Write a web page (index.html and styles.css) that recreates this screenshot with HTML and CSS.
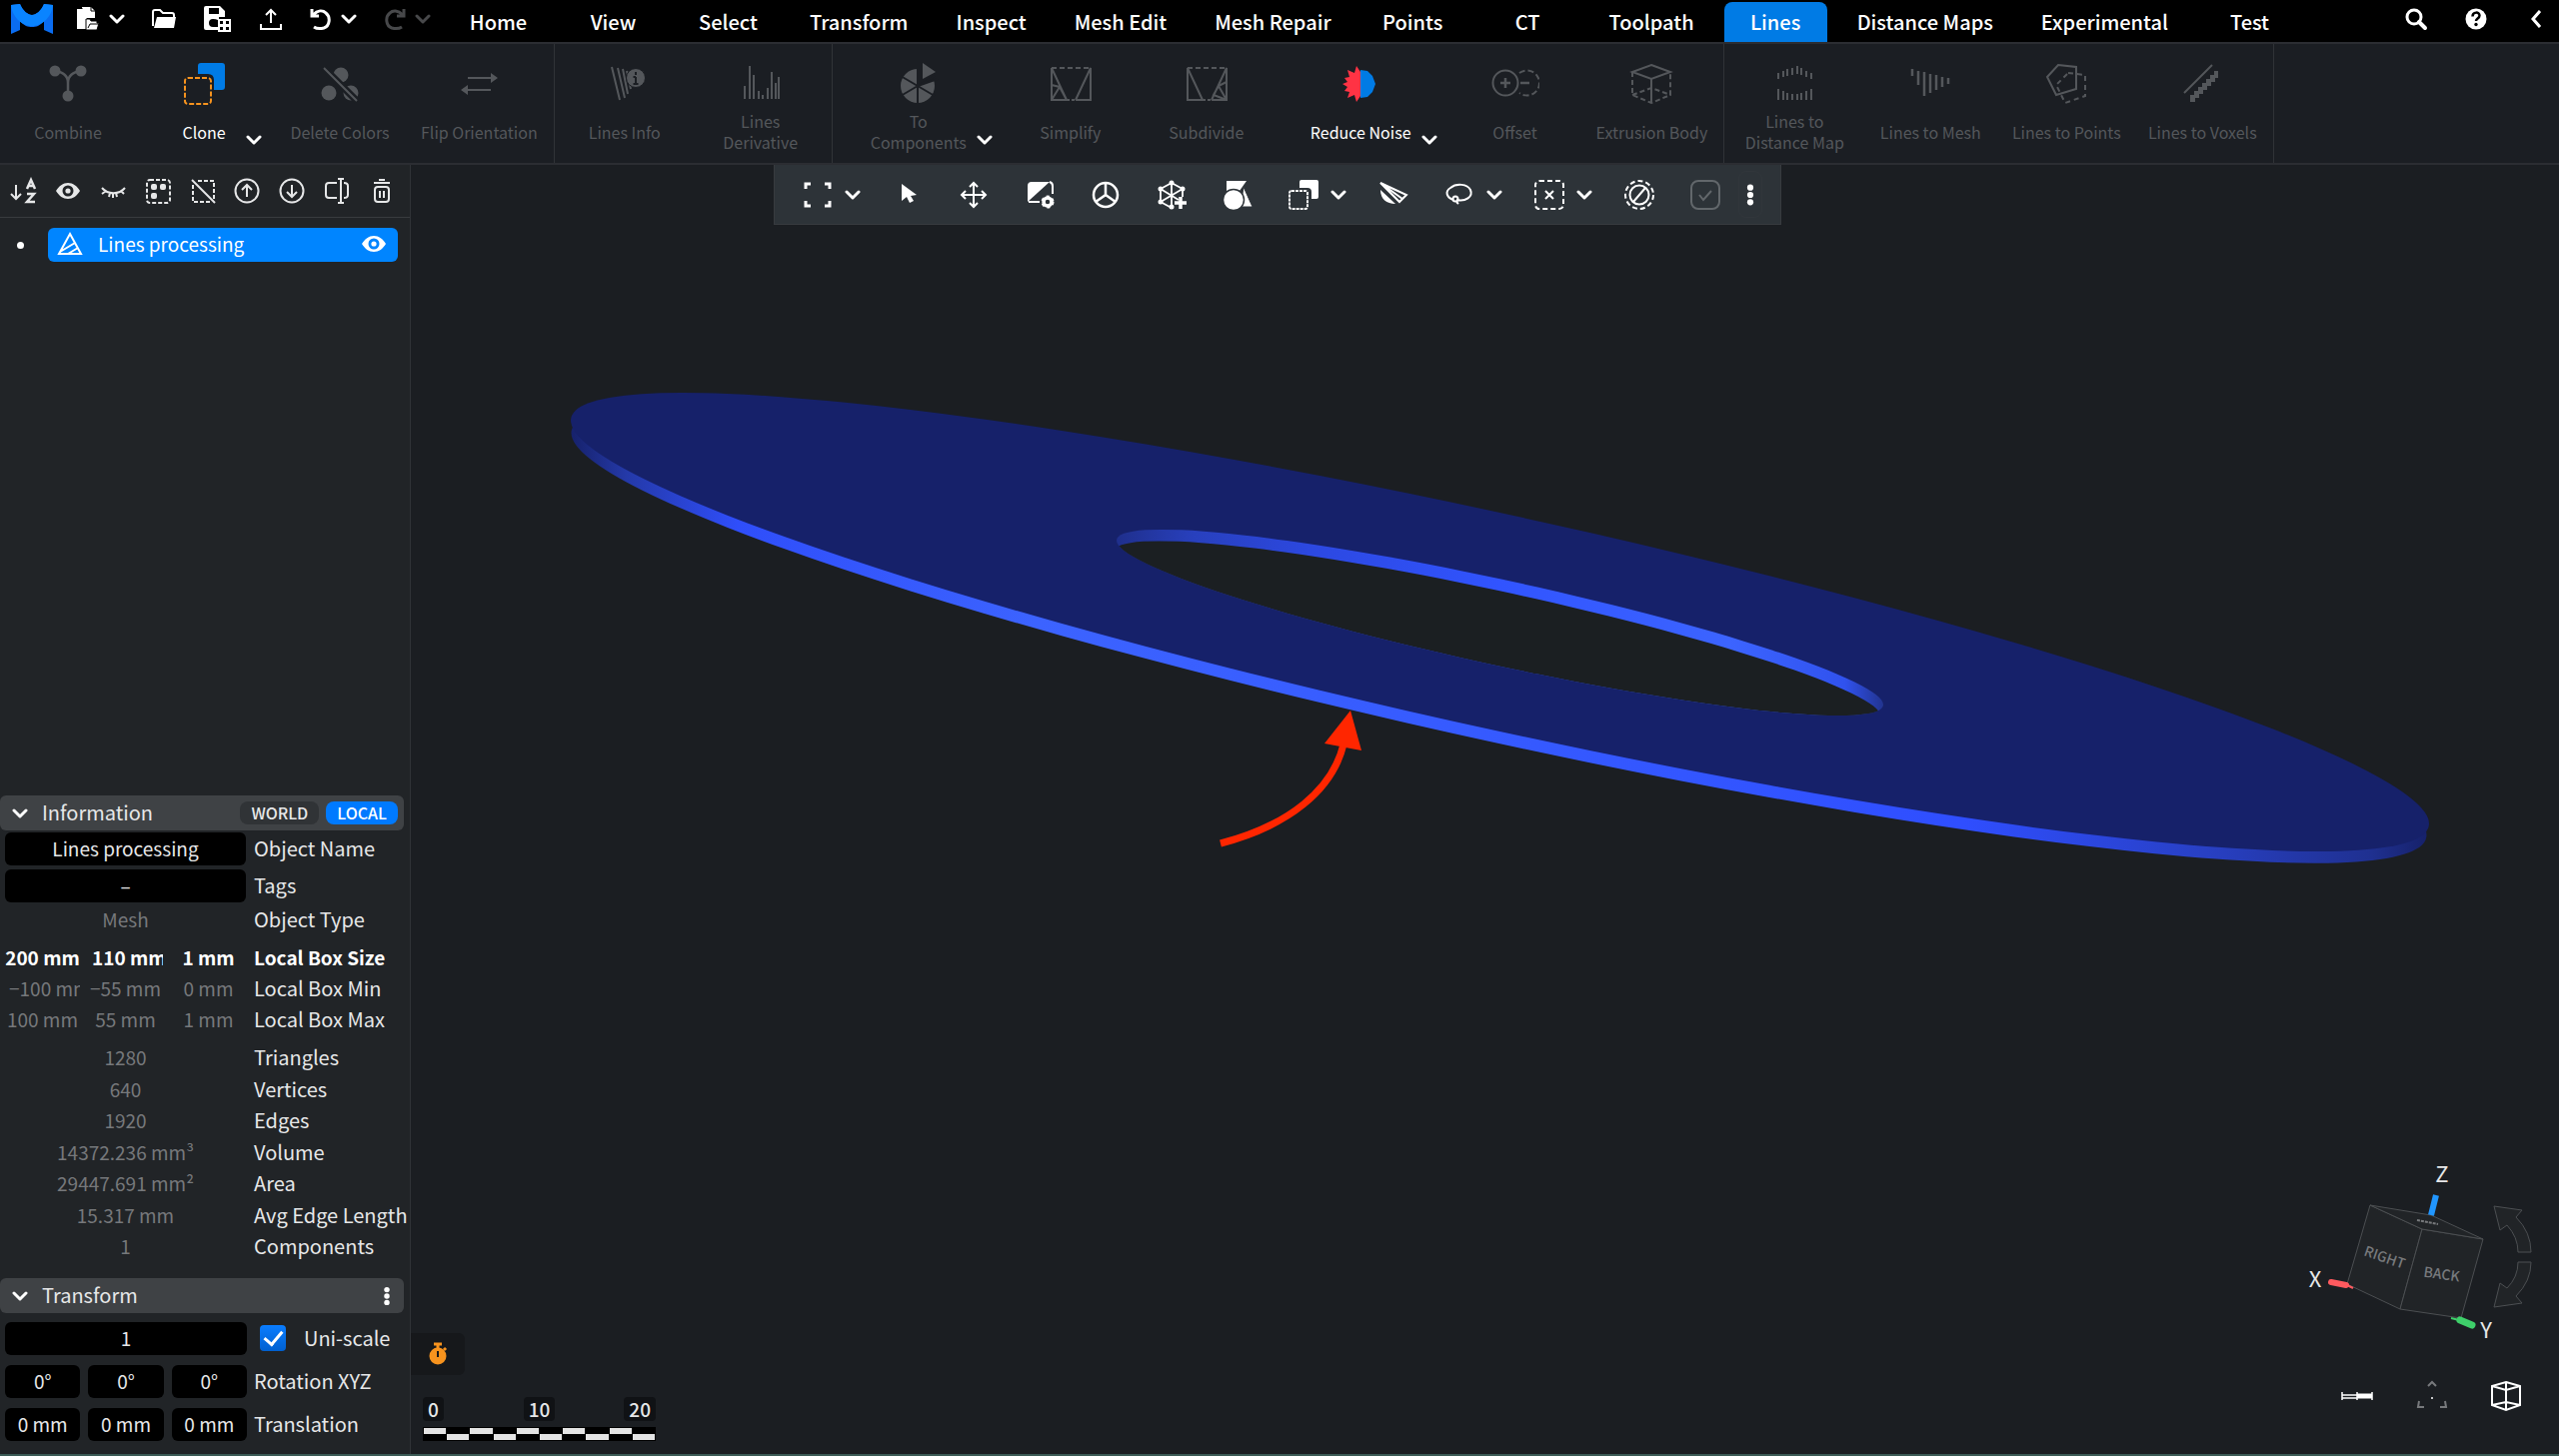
FILE: index.html
```html
<!DOCTYPE html>
<html lang="en">
<head>
  <meta charset="UTF-8">
  <meta name="viewport" content="width=device-width, initial-scale=1">
  <title>Lines processing</title>
  <link rel="stylesheet" href="styles.css">
</head>
<body>

<!-- shared icons -->
<svg class="defs" aria-hidden="true">
  <symbol id="chevron" viewBox="0 0 16 16"><path d="M2 5l6 6 6-6" fill="none" stroke="currentColor" stroke-width="3" stroke-linecap="round" stroke-linejoin="round"/></symbol>
  <symbol id="dots" viewBox="0 0 24 30"><circle cx="12" cy="7" r="3.4"/><circle cx="12" cy="15" r="3.4"/><circle cx="12" cy="23" r="3.4"/></symbol>
  <symbol id="eye" viewBox="0 0 28 28"><path fill-rule="evenodd" d="M2 14C5 9 9 6 14 6s9 3 12 8c-3 5-7 8-12 8s-9-3-12-8zm12-5.500a5.500 5.500 0 1 0 0 11 5.500 5.500 0 0 0 0-11z"/><circle cx="14" cy="14" r="2.600"/></symbol>
</svg>

<header class="topbar">
  <div class="quick">
    <svg class="logo" viewBox="0 0 42 30"><path fill="#0a6cf0" d="M0 1l9-1c3 7 8 11 12 11s9-4 12-11l9 1v29l-9-4v-9c-4 5-8 6-12 6s-8-1-12-6v9l-9 4z"/><path fill="#0a84ff" d="M0 1l9-1c3 7 8 11 12 11s9-4 12-11l9 1c-1 11-10 21-21 21S1 12 0 1z"/></svg>
    <button class="qbtn" aria-label="New"><svg viewBox="0 0 26 26" width="26" height="26" fill="#fff"><path d="M2 3h5V1h9l4 4v7h-8v11H2z"/><path d="M7 3v-1M16 1v4h4" stroke="#000" fill="none"/><path d="M11 13h4l1 2h6v2h2l-2 7H11z" stroke="#000"/><path d="M13 22l2-4h8" stroke="#000" fill="none"/></svg><svg class="chev"><use href="#chevron"/></svg></button>
    <button class="qbtn" aria-label="Open"><svg viewBox="0 0 26 26" width="26" height="26"><path d="M2 20V6q0-2 2-2h5l3 3h9q2 0 2 2v2" fill="none" stroke="#fff" stroke-width="2"/><path d="M6 11h19l-2 11H3z" fill="#fff"/></svg></button>
    <button class="qbtn" aria-label="Save as"><svg viewBox="0 0 30 28" width="30" height="28" fill="#fff"><path fill-rule="evenodd" d="M3 1h14l5 5v6h-6v13H3q-2 0-2-2V3q0-2 2-2zM6 3v6h10V3zm4 11a4 4 0 0 0 0 8h5v-7q-2-1-5-1z"/><path fill-rule="evenodd" d="M15 14h13v13H15zm2 2v3h3v-3zm6 0v3h3v-3zm-6 6v3h3v-3zm6 0v3h3v-3z"/></svg></button>
    <button class="qbtn" aria-label="Export"><svg viewBox="0 0 24 24" width="24" height="24" fill="none" stroke="#fff" stroke-width="2"><path d="M12 16V4M7 8l5-5 5 5M2 17v5h20v-5"/></svg></button>
    <button class="qbtn" aria-label="Undo"><svg viewBox="0 0 24 24" width="24" height="24" fill="none" stroke="#fff" stroke-width="3"><path d="M3 2v7h7M4 8c5-5 10-5 13-2 5 4 4 13-2 15-4 1-7 1-10-1"/></svg><svg class="chev"><use href="#chevron"/></svg></button>
    <button class="qbtn qbtn-off" aria-label="Redo"><svg viewBox="0 0 24 24" width="24" height="24" fill="none" stroke="currentColor" stroke-width="3"><path d="M21 2v7h-7M20 8C15 3 10 3 7 6c-5 4-4 13 2 15 4 1 7 1 10-1"/></svg><svg class="chev"><use href="#chevron"/></svg></button>
  </div>

  <nav class="tabs">
    <a href="#">Home</a>
    <a href="#">View</a>
    <a href="#">Select</a>
    <a href="#">Transform</a>
    <a href="#">Inspect</a>
    <a href="#">Mesh Edit</a>
    <a href="#">Mesh Repair</a>
    <a href="#">Points</a>
    <a href="#">CT</a>
    <a href="#">Toolpath</a>
    <a href="#" class="active" aria-current="page">Lines</a>
    <a href="#">Distance Maps</a>
    <a href="#">Experimental</a>
    <a href="#">Test</a>
  </nav>

  <div class="top-right">
    <button aria-label="Search"><svg viewBox="0 0 24 24" width="24" height="24" fill="none" stroke="#fff"><circle cx="10" cy="10" r="7" stroke-width="3"/><path d="M15 15l6 6" stroke-width="4" stroke-linecap="round"/></svg></button>
    <button aria-label="Help"><svg viewBox="0 0 24 24" width="24" height="24"><circle cx="12" cy="12" r="10.500" fill="#fff"/><path d="M8.500 9.500c0-5 7-5 7-1 0 3-3.500 3-3.500 5.500" fill="none" stroke="#000" stroke-width="2.500"/><circle cx="12" cy="17.500" r="1.700"/></svg></button>
    <button aria-label="Collapse"><svg viewBox="0 0 24 24" width="24" height="24" fill="none" stroke="#fff" stroke-width="3"><path d="M16 4l-7 8 7 8"/></svg></button>
  </div>
</header>

<div class="ribbon">
  <section class="group">
    <button class="tool" disabled><svg viewBox="0 0 48 48" fill="currentColor"><circle cx="11" cy="11" r="5.500"/><circle cx="37" cy="11" r="5.500"/><circle cx="24" cy="36" r="5.500"/><path d="M11 11c8 1 13 5 13 12v12M37 11c-8 1-13 5-13 12" fill="none" stroke="currentColor" stroke-width="2.500"/></svg><span>Combine</span></button>
    <button class="tool"><svg viewBox="0 0 48 48"><path fill="#007be5" d="M18 14V6q0-3 3-3h21q3 0 3 3v21q0 3-3 3h-8V20q0-6-6-6z"/><rect x="5" y="18" width="26" height="26" rx="3" fill="none" stroke="#f7931e" stroke-width="2" stroke-dasharray="5 2"/></svg><span>Clone</span><svg class="chev"><use href="#chevron"/></svg></button>
    <button class="tool" disabled><svg viewBox="0 0 48 48" fill="currentColor"><circle cx="25" cy="15" r="7.500"/><circle cx="13" cy="33" r="7.500"/><circle cx="35" cy="33" r="7.500"/><path d="M8 8l33 33" stroke="#1b1e23" stroke-width="7"/><path d="M8 8l33 33" stroke="currentColor" stroke-width="2"/></svg><span>Delete Colors</span></button>
    <button class="tool" disabled><svg viewBox="0 0 48 48" fill="currentColor"><path d="M13 18h25M36 30H11" stroke="currentColor" stroke-width="2"/><path d="M36 13l7 5-7 5zM13 25l-7 5 7 5z"/></svg><span>Flip Orientation</span></button>
  </section>
  <section class="group">
    <button class="tool" disabled><svg viewBox="0 0 48 48"><path d="M11 7l8 33M17 8l7 30M22 9l5 25M26 11l4 18" fill="none" stroke="currentColor" stroke-width="2"/><circle cx="35" cy="18" r="9.500" fill="currentColor" stroke="#1b1e23"/><path d="M35 17v7M32.500 24h5M32.500 17H35M35 12v3" stroke="#1b1e23" stroke-width="2"/></svg><span>Lines Info</span></button>
    <button class="tool" disabled><svg viewBox="0 0 48 48"><path d="M8 26v13M13 6v33M17 15v24M22 31v8M26 35v4M31 28v11M35 12v27M39 23v16M42 17v22" stroke="currentColor" stroke-width="2"/></svg><span>Lines<br>Derivative</span></button>
  </section>
  <section class="group">
    <button class="tool" disabled><svg viewBox="0 0 48 48"><circle cx="23" cy="26" r="17" fill="currentColor"/><path d="M23 26V7h20v12zM23 7v38M6 16l34 20M6 36l34-20" fill="#1b1e23" stroke="#1b1e23" stroke-width="2"/><path d="M28 19V3l13 9z" fill="currentColor"/></svg><span>To<br>Components</span><svg class="chev"><use href="#chevron"/></svg></button>
    <button class="tool" disabled><svg viewBox="0 0 48 48" fill="none" stroke="currentColor" stroke-width="2"><path d="M5 8v32h15M29 40h15V8L29 40M5 8l15 32M5 25l8 2-8 13M13 27l7 13"/><path d="M5 8h39" stroke-dasharray="5 3"/><path d="M20 40h9" stroke-dasharray="3 2"/></svg><span>Simplify</span></button>
    <button class="tool" disabled><svg viewBox="0 0 48 48" fill="none" stroke="currentColor" stroke-width="2"><path d="M20 40H5V8l15 32M29 40h15V8L29 40M44 22l-8 4 8 14M36 26l-5 9 13 5"/><path d="M5 8h39" stroke-dasharray="5 3"/><path d="M20 40h9" stroke-dasharray="3 2"/></svg><span>Subdivide</span></button>
    <button class="tool"><svg viewBox="0 0 48 48"><path fill="#ff3344" d="M24 12l-4-6-2 7-7-3 2 7-5 1 3 4-5 2 5 3-3 4 5 1-2 6 7-3 2 7 4-6z"/><path fill="#007be5" d="M24 10l7 1 5 5 3 8-3 8-5 5-7 1z"/></svg><span>Reduce Noise</span><svg class="chev"><use href="#chevron"/></svg></button>
    <button class="tool" disabled><svg viewBox="0 0 48 48" fill="none" stroke="currentColor" stroke-width="2"><circle cx="14" cy="23" r="12.500"/><path d="M14 18v10M9 23h10M29 23h9" stroke-width="2.500"/><path d="M28 13a12.500 12.500 0 1 1 0 20" stroke-dasharray="6 3"/></svg><span>Offset</span></button>
    <button class="tool" disabled><svg viewBox="0 0 48 48" fill="none" stroke="currentColor" stroke-width="2"><path d="M24 5l19 7-19 7-19-7zM24 19v24"/><path d="M5 12v23l19 8 19-8V12M5 35l19-7 19 7" stroke-dasharray="5 3"/></svg><span>Extrusion Body</span></button>
  </section>
  <section class="group">
    <button class="tool" disabled><svg viewBox="0 0 48 48"><path d="M8 13v6M13 11v6M17 9v7M22 8v7M27 6v8M31 8v7M36 11v6M41 13v6M8 29v11M13 31v9M17 33v7M22 34v6M27 34v6M31 33v7M36 31v9M41 29v11" stroke="currentColor" stroke-width="2"/></svg><span>Lines to<br>Distance Map</span></button>
    <button class="tool" disabled><svg viewBox="0 0 48 48"><path d="M6 9v7M12 11v14M18 12v24M24 14v19M30 15v15M36 17v10M42 18v6" stroke="currentColor" stroke-width="2.500"/></svg><span>Lines to Mesh</span></button>
    <button class="tool" disabled><svg viewBox="0 0 48 48" fill="none" stroke="currentColor" stroke-width="2"><path d="M16 5l18 2v22l-20 6L5 17z"/><path d="M26 13l17 2v21l-20 7-9-18z" stroke-dasharray="5 4"/></svg><span>Lines to Points</span></button>
    <button class="tool" disabled><svg viewBox="0 0 48 48"><path d="M6 33L34 5" stroke="currentColor" stroke-width="2"/><path fill="currentColor" d="M12 35h4v-4h4v-4h4v-4h4v-4h4v-4h4v-4h4v7h-3v4h-4v4h-4v4h-4v4h-4v4h-4v4h-5z"/></svg><span>Lines to Voxels</span></button>
  </section>
</div>

<main class="workspace">
  <aside class="sidebar">
    <div class="tree-tools">
      <button aria-label="Sort"><svg viewBox="0 0 28 28"><path d="M7 8v14M2 17l5 5 5-5" fill="none" stroke="currentColor" stroke-width="2"/><path d="M18 12l4-9 4 9M19 9h6M18 17h7l-7 8h8" fill="none" stroke="currentColor" stroke-width="2.500"/></svg></button>
      <button aria-label="Show all"><svg><use href="#eye"/></svg></button>
      <button aria-label="Hide all"><svg viewBox="0 0 28 28" fill="none" stroke="currentColor" stroke-width="2"><path d="M3 11c6 7 17 7 23 0M7 14l-4 3M11 16l-1 4M17 16l1 4M22 14l3 3M14 16v5"/></svg></button>
      <button aria-label="Select all"><svg viewBox="0 0 28 28"><rect x="3" y="3" width="23" height="23" rx="3" fill="none" stroke="currentColor" stroke-width="2" stroke-dasharray="4 2"/><rect x="7" y="7" width="6" height="6" rx="2"/><rect x="16" y="7" width="6" height="6" rx="2"/><rect x="7" y="16" width="6" height="6" rx="2"/></svg></button>
      <button aria-label="Unselect all"><svg viewBox="0 0 28 28" fill="none" stroke="currentColor" stroke-width="2"><path d="M9 4h16v18M21 25H4V8" stroke-dasharray="4 2"/><path d="M3 3l23 23"/></svg></button>
      <button aria-label="Move up"><svg viewBox="0 0 28 28" fill="none" stroke="currentColor" stroke-width="2"><circle cx="14" cy="14" r="11.500"/><path d="M14 20V8M9 13l5-5 5 5"/></svg></button>
      <button aria-label="Move down"><svg viewBox="0 0 28 28" fill="none" stroke="currentColor" stroke-width="2"><circle cx="14" cy="14" r="11.500"/><path d="M14 8v12M9 15l5 5 5-5"/></svg></button>
      <button aria-label="Rename"><svg viewBox="0 0 28 28" fill="none" stroke="currentColor" stroke-width="2"><path d="M14 6H6q-3 0-3 3v9q0 3 3 3h8M21 6q4 0 4 3v9q0 3-4 3M18 3v23M15 2h6M15 26h6"/></svg></button>
      <button aria-label="Delete"><svg viewBox="0 0 28 28" fill="none" stroke="currentColor" stroke-width="2"><rect x="7" y="10" width="14" height="15" rx="3"/><path d="M6 6h16M11 3h6M12 14v7M16 14v7"/></svg></button>
    </div>

    <div class="tree">
      <span class="bullet"></span>
      <button class="tree-item">
        <svg viewBox="0 0 28 28" fill="none" stroke="currentColor" stroke-width="2"><path d="M14 4l11 20H3zM4 22l15-9M12 24l10-6"/></svg>
        <span>Lines processing</span>
        <svg fill="#fff"><use href="#eye"/></svg>
      </button>
    </div>

    <section class="panel">
      <header class="panel-head">
        <svg class="chev"><use href="#chevron"/></svg>
        <h2>Information</h2>
        <button class="pill">WORLD</button>
        <button class="pill on">LOCAL</button>
      </header>
      <table class="info">
        <colgroup><col class="v"><col class="v"><col class="v"><col></colgroup>
        <tbody>
          <tr class="field"><td colspan="3"><input type="text" id="objName" value="Lines processing"></td><th><label for="objName">Object Name</label></th></tr>
          <tr class="field"><td colspan="3"><input type="text" id="tags" value="–"></td><th><label for="tags">Tags</label></th></tr>
          <tr><td colspan="3">Mesh</td><th>Object Type</th></tr>
        </tbody>
        <tbody>
          <tr class="strong"><td>200 mm</td><td class="clip">110 mm</td><td>1 mm</td><th>Local Box Size</th></tr>
          <tr><td class="clip">−100 mm</td><td>−55 mm</td><td>0 mm</td><th>Local Box Min</th></tr>
          <tr><td>100 mm</td><td>55 mm</td><td>1 mm</td><th>Local Box Max</th></tr>
        </tbody>
        <tbody class="stats">
          <tr><td colspan="3">1280</td><th>Triangles</th></tr>
          <tr><td colspan="3">640</td><th>Vertices</th></tr>
          <tr><td colspan="3">1920</td><th>Edges</th></tr>
          <tr><td colspan="3">14372.236 mm³</td><th>Volume</th></tr>
          <tr><td colspan="3">29447.691 mm²</td><th>Area</th></tr>
          <tr><td colspan="3">15.317 mm</td><th>Avg Edge Length</th></tr>
          <tr><td colspan="3">1</td><th>Components</th></tr>
        </tbody>
      </table>
    </section>

    <section class="panel">
      <header class="panel-head">
        <svg class="chev"><use href="#chevron"/></svg>
        <h2>Transform</h2>
        <button class="more" aria-label="Transform options"><svg width="22" height="24" fill="#fff"><use href="#dots"/></svg></button>
      </header>
      <div class="transform">
        <div class="trow"><input type="text" value="1" aria-label="Scale"><label class="uni"><input type="checkbox" checked>Uni-scale</label></div>
        <div class="trow"><div class="xyz"><input type="text" value="0°" aria-label="Rotation X"><input type="text" value="0°" aria-label="Rotation Y"><input type="text" value="0°" aria-label="Rotation Z"></div><span>Rotation XYZ</span></div>
        <div class="trow"><div class="xyz"><input type="text" value="0 mm" aria-label="Translation X"><input type="text" value="0 mm" aria-label="Translation Y"><input type="text" value="0 mm" aria-label="Translation Z"></div><span>Translation</span></div>
      </div>
    </section>
  </aside>

  <div class="viewport">
    <!-- flat ring with a hole, seen at an angle -->
    <svg class="scene" viewBox="411 165 2149 1290" preserveAspectRatio="xMidYMid slice">
      <defs>
        <linearGradient id="rim" gradientUnits="userSpaceOnUse" x1="-929" y1="0" x2="929" y2="0">
          <stop offset="0" stop-color="#16216a"/><stop offset=".03" stop-color="#2439a8"/><stop offset=".09" stop-color="#2f4efa"/><stop offset=".25" stop-color="#3c63ff"/><stop offset=".6" stop-color="#3356ff"/><stop offset=".75" stop-color="#2f4eff"/><stop offset=".88" stop-color="#2840c4"/><stop offset=".97" stop-color="#1f3090"/><stop offset="1" stop-color="#16216a"/>
        </linearGradient>
        <linearGradient id="hole-rim" gradientUnits="userSpaceOnUse" x1="1117" y1="0" x2="1884" y2="0">
          <stop offset="0" stop-color="#1f2f8c"/><stop offset=".1" stop-color="#2840bd"/><stop offset=".25" stop-color="#2c48e0"/><stop offset=".5" stop-color="#3154ff"/><stop offset=".8" stop-color="#3c64ff"/><stop offset=".95" stop-color="#3052ee"/><stop offset="1" stop-color="#22348f"/>
        </linearGradient>
        <clipPath id="hole"><ellipse rx="383.500" ry="43.700" transform="translate(1500.500 623) skewY(12.100)"/></clipPath>
      </defs>
      <ellipse rx="928" ry="109.500" fill="url(#rim)" transform="translate(1499.500 634.500) skewY(12.240)"/>
      <ellipse rx="929.500" ry="109.500" fill="#16216a" transform="translate(1500.500 622.500) skewY(12.240)"/>
      <g clip-path="url(#hole)">
        <rect x="1100" y="500" width="800" height="240" fill="url(#hole-rim)"/>
        <ellipse rx="383.500" ry="43.700" fill="#1b1f22" transform="translate(1498 634.500) skewY(12.100)"/>
      </g>
      <path d="M1221 844C1290 826 1333 790 1344 745" fill="none" stroke="#ff2600" stroke-width="7"/>
      <path d="M1351 711l11 40-37-7z" fill="#ff2600"/>
    </svg>

    <div class="float-bar">
      <button aria-label="Fit view"><svg viewBox="0 0 30 30" fill="none" stroke="currentColor" stroke-width="3"><path d="M3 9V4h5M22 4h5v5M27 21v5h-5M8 26H3v-5"/></svg><svg class="chev"><use href="#chevron"/></svg></button>
      <button aria-label="Pick"><svg viewBox="0 0 30 30"><path d="M9 4v17l5-4 3 6 4-2-3-5 6-1z"/></svg></button>
      <button aria-label="Move"><svg viewBox="0 0 30 30" fill="none" stroke="currentColor" stroke-width="2"><path d="M15 3v24M3 15h24M11 7l4-4 4 4M11 23l4 4 4-4M7 11l-4 4 4 4M23 11l4 4-4 4"/></svg></button>
      <button aria-label="Shading"><svg viewBox="0 0 30 30"><path d="M3 22V6q0-4 4-4h18z"/><path d="M25 2q3 1 3 4v8M4 22h11" fill="none" stroke="currentColor" stroke-width="2"/><circle cx="23" cy="22" r="4" fill="none" stroke="currentColor" stroke-width="3.500"/><circle cx="23" cy="22" r="5.500" fill="none" stroke="currentColor" stroke-width="2" stroke-dasharray="3 3"/></svg></button>
      <button aria-label="World axes"><svg viewBox="0 0 30 30" fill="none" stroke="currentColor" stroke-width="2.500"><circle cx="15" cy="15" r="12"/><path d="M15 3v12L5 22M15 15l10 7"/></svg></button>
      <button aria-label="Add mesh"><svg viewBox="0 0 30 30"><path d="M15 3L4 9v13l11 6M15 3l11 6v8M15 3v25M4 9l18 11M4 22L26 9M4 22l11 6" fill="none" stroke="currentColor" stroke-width="1.800"/><circle cx="15" cy="3" r="2.500"/><circle cx="4" cy="9" r="2.500"/><circle cx="26" cy="9" r="2.500"/><circle cx="4" cy="22" r="2.500"/><circle cx="15" cy="27" r="2.500"/><path d="M24 17v12M18 23h12" stroke="currentColor" stroke-width="3.500"/></svg></button>
      <button aria-label="Add shape"><svg viewBox="0 0 30 30"><path d="M4 1h20l-7 10H4z"/><path d="M21 7l9 20H18z" stroke="#2d3338"/><circle cx="11" cy="20" r="10.500" stroke="#2d3338" stroke-width="1.500"/></svg></button>
      <button aria-label="Clone"><svg viewBox="0 0 30 30"><path d="M11 8V2q0-2 2-2h15q2 0 2 2v15q0 2-2 2h-5v-7q0-4-4-4z"/><rect x="1" y="11" width="18" height="18" rx="2" fill="none" stroke="currentColor" stroke-width="2" stroke-dasharray="3 1"/></svg><svg class="chev"><use href="#chevron"/></svg></button>
      <button aria-label="Trim"><svg viewBox="0 0 30 30"><path d="M2 10c0 9 6 14 15 14z"/><path d="M2 3l26 12-7 7zM2 3l22 16" fill="none" stroke="currentColor" stroke-width="2"/></svg></button>
      <button aria-label="Lasso"><svg viewBox="0 0 30 30" fill="none" stroke="currentColor" stroke-width="2"><path d="M9 20C1 17 1 11 6 8c6-5 17-4 20 2 3 7-5 12-14 10"/><circle cx="11" cy="19" r="2.500"/><path d="M12 22l2 2"/></svg><svg class="chev"><use href="#chevron"/></svg></button>
      <button aria-label="Delete selection"><svg viewBox="0 0 30 30" fill="none" stroke="currentColor" stroke-width="2"><rect x="1" y="1" width="28" height="28" rx="4" stroke-dasharray="5 3"/><path d="M11 11l8 8M19 11l-8 8"/></svg><svg class="chev"><use href="#chevron"/></svg></button>
      <button aria-label="Clear selection"><svg viewBox="0 0 30 30" fill="none" stroke="currentColor" stroke-width="2"><circle cx="15" cy="15" r="14" stroke-dasharray="5 3"/><circle cx="15" cy="15" r="9.500"/><path d="M9 22L21 8"/></svg></button>
      <button aria-label="Apply" disabled><svg viewBox="0 0 30 30" fill="none" stroke="currentColor" stroke-width="2"><rect x="1" y="1" width="28" height="28" rx="7"/><path d="M9 15l4 5 8-9"/></svg></button>
      <button class="bar-more" aria-label="More"><svg viewBox="0 0 24 30"><use href="#dots"/></svg></button>
    </div>

    <div class="scale-box">
      <button class="timer" aria-label="Timer"><svg viewBox="0 0 20 24" width="20" height="24"><circle cx="10" cy="14" r="8.500" fill="#f7931e"/><path d="M6 2h8M10 2v4M16 6l2 2" stroke="#f7931e" stroke-width="3"/><path d="M10 9v6" stroke="#16181b" stroke-width="2"/></svg></button>
      <div class="scale">
        <div class="ticks"><span>0</span><span>10</span><span>20</span></div>
        <div class="ruler"><i></i><i></i><i></i><i></i><i></i><i></i><i></i><i></i><i></i><i></i></div>
      </div>
    </div>

    <div class="gizmo">
      <svg viewBox="0 0 300 220" width="300" height="220">
        <g fill="#212427" stroke="#4c4f52"><path d="M111 66l52 24-22 80-53-25z"/><path d="M163 90l61 10-22 79-61-9z"/><path d="M111 66l61 10 52 24-61-10z"/></g>
        <path d="M158 81l21 4" stroke="#77797c" stroke-dasharray="3 1" stroke-width="2"/>
        <path d="M177 56l-5 20" stroke="#2196ff" stroke-width="6"/>
        <path d="M72 143l15 3" stroke="#ff5a5f" stroke-width="6" stroke-linecap="round"/><path d="M84 144l10 5" stroke="#ff5a5f" stroke-width="2"/>
        <path d="M201 181l12 5" stroke="#3ecf6a" stroke-width="7" stroke-linecap="round"/><path d="M192 179l8 2" stroke="#3ecf6a" stroke-width="2"/>
        <g fill="#212427" stroke="#4c4f52"><path d="M235 67l28 4-6 7q15 15 15 35h-13q0-15-11-27l-7 5z"/><path d="M235 168l28-4-6-7q15-15 15-34h-13q0 15-11 26l-7-5z"/></g>
        <g class="axis"><text x="183" y="43">Z</text><text x="56" y="148">X</text><text x="227" y="199">Y</text></g>
        <g class="face"><text transform="translate(124 123) rotate(19)">RIGHT</text><text transform="translate(182 140) rotate(8)">BACK</text></g>
      </svg>
      <div class="view-btns">
        <button aria-label="Clipping"><svg viewBox="0 0 32 32"><path d="M1 12v8M16 12v8M31 12v8M1 15h15M1 18h15" stroke="currentColor" stroke-width="1.500"/><path d="M16 16h15" stroke="currentColor" stroke-width="5"/></svg></button>
        <button class="dim" aria-label="Rotation center"><svg viewBox="0 0 32 32" fill="none" stroke="currentColor" stroke-width="2"><path d="M12 6l4-4 4 4M3 21l-1 6h6M29 21l1 6h-6"/><circle cx="16" cy="18" r="1" stroke="none" fill="#fff"/></svg></button>
        <button aria-label="Perspective"><svg viewBox="0 0 32 32" fill="none" stroke="currentColor" stroke-width="2"><path d="M16 2l14 4v19l-14 5-14-5V6zM2 6l14 4 14-4M16 2v28M2 25l14-3 14 3"/></svg></button>
      </div>
    </div>
  </div>
</main>

</body>
</html>
```
FILE: styles.css
```css
* {
  box-sizing: border-box;
}
body {
  margin: 0;
  min-height: 100vh;
  display: flex;
  flex-direction: column;
  background: #1b1e22;
  color: #e6e7e8;
  font-family: "Noto Sans CJK SC", "Noto Sans", sans-serif;
  font-size: 20px;
  line-height: 30px;
}
button, input {
  font: inherit;
  color: inherit;
}
button {
  background: none;
  border: none;
  padding: 0;
  cursor: pointer;
}
svg {
  display: block;
  flex: none;
}
.defs {
  position: absolute;
  width: 0;
  height: 0;
}
.chev {
  width: 16px;
  height: 16px;
  color: #fff;
}

/* top bar */
.topbar {
  display: flex;
  height: 44px;
  background: #000;
  border-bottom: 2px solid #2b2d32;
}
.quick {
  width: 447px;
  flex: none;
  display: flex;
  align-items: center;
  gap: 26px;
  padding: 0 0 4px 11px;
}
.logo {
  width: 42px;
  height: 30px;
  margin-right: -4px;
}
.qbtn {
  display: flex;
  align-items: center;
  gap: 8px;
  color: #fff;
}
.qbtn-off, .qbtn-off .chev {
  color: #47484a;
}
.tabs {
  display: flex;
  gap: 12px;
  padding-top: 2px;
}
.tabs a {
  min-width: 103px;
  padding: 0 18px;
  border-radius: 8px 8px 0 0;
  text-align: center;
  line-height: 40px;
  color: #fff;
  font-weight: 500;
  text-decoration: none;
  white-space: nowrap;
}
.tabs .active {
  background: #007be5;
}
.top-right {
  display: flex;
  align-items: center;
  gap: 36px;
  margin-left: auto;
  padding: 0 11px 4px 0;
}

/* ribbon */
.ribbon {
  display: flex;
  height: 121px;
  background: #1b1e23;
  border-bottom: 2px solid #2b2d32;
}
.group {
  display: flex;
  padding: 0 3px 0 2px;
  border-right: 1px solid #303337;
}
.group:first-child {
  padding-left: 0;
}
.tool {
  display: grid;
  grid-template-columns: 1fr auto 1fr;
  grid-template-rows: 48px 42px;
  row-gap: 3px;
  align-content: start;
  align-items: center;
  justify-items: center;
  min-width: 136px;
  padding: 16px 13px 0;
  font-size: 16px;
  line-height: 21px;
  color: #fff;
  white-space: nowrap;
}
.tool > svg:first-child {
  grid-column: 1 / 4;
  width: 48px;
  height: 48px;
}
.tool span {
  grid-column: 2;
}
.tool .chev {
  grid-column: 3;
  justify-self: end;
  margin: 16px 10px 0;
}
.tool:has(.chev) {
  grid-template-columns: minmax(36px, 1fr) auto minmax(36px, 1fr);
  padding: 16px 0 0;
}
.tool:disabled {
  color: #54575b;
}

/* workspace */
.workspace {
  flex: 1;
  display: flex;
  border-bottom: 2px solid #3b5a55;
}
.sidebar {
  width: 411px;
  flex: none;
  display: flex;
  flex-direction: column;
  background: #212427;
  border-right: 1px solid #303337;
}
.tree-tools {
  display: flex;
  height: 53px;
  padding: 0 14px 0 9px;
  align-items: center;
  justify-content: space-between;
  border-bottom: 1px solid #383b3e;
}
.tree-tools button, .tree-tools svg {
  width: 28px;
  height: 28px;
  color: #e6e7e8;
  fill: currentColor;
}
.tree-tools svg[fill="none"] {
  fill: none;
}
.tree {
  flex: 1;
  display: flex;
  align-items: flex-start;
  gap: 24px;
  padding: 10px 12px 0 17px;
}
.bullet {
  width: 7px;
  height: 7px;
  margin-top: 14px;
  border-radius: 50%;
  background: #fff;
}
.tree-item {
  flex: 1;
  display: flex;
  align-items: center;
  gap: 14px;
  height: 34px;
  padding: 0 10px 2px 8px;
  border-radius: 6px;
  background: #0085ff;
  color: #fff;
  font-size: 19px;
}
.tree-item svg {
  width: 28px;
  height: 28px;
}
.tree-item span {
  flex: 1;
  text-align: left;
}
.panel-head {
  display: flex;
  align-items: center;
  height: 35px;
  margin-right: 6px;
  padding: 0 6px 0 12px;
  border-radius: 6px;
  background: #3f4245;
}
.panel-head h2 {
  flex: 1;
  margin: 0 0 0 14px;
  padding-bottom: 2px;
  font-size: 20px;
  font-weight: 400;
}
.pill {
  height: 23px;
  padding: 0 11px;
  border-radius: 8px;
  background: #303336;
  font-size: 16px;
  font-weight: 500;
  line-height: 21px;
}
.pill.on {
  margin-left: 7px;
  background: #007aff;
  color: #fff;
}
.info {
  width: 413px;
  margin: 0 -6px 16px -3px;
  table-layout: fixed;
  border-collapse: separate;
  border-spacing: 8px 0;
}
.info .v {
  width: 75px;
}
.info td, .info th {
  height: 31px;
  padding: 0 0 2px;
  line-height: 29px;
  font-weight: 400;
  white-space: nowrap;
}
.info td {
  overflow: hidden;
  text-align: center;
  font-size: 19px;
  color: #76787b;
}
.info th {
  text-align: left;
}
.info .stats tr:nth-child(even) td {
  height: 32px;
}
.info .field td {
  height: 37px;
  padding: 0;
  color: #e6e7e8;
}
.info .clip {
  padding-left: 4px;
}
.info .strong td, .info .strong th {
  font-size: 19px;
  font-weight: 700;
  color: #fff;
}
.info tbody + tbody tr:first-child > * {
  padding-top: 7px;
}
input[type="text"] {
  display: block;
  width: 100%;
  min-width: 0;
  height: 33px;
  padding: 0 0 2px;
  border: none;
  border-radius: 6px;
  background: #000;
  font-size: 19px;
  text-align: center;
}
.transform {
  display: flex;
  flex-direction: column;
  gap: 10px;
  padding: 9px 0 13px 5px;
}
.trow {
  display: grid;
  grid-template-columns: 242px 1fr;
  gap: 7px;
  align-items: center;
  height: 33px;
}
.trow > span {
  padding-bottom: 2px;
}
.xyz {
  display: grid;
  grid-template-columns: repeat(3, 1fr);
  gap: 8px;
}
.uni {
  display: flex;
  align-items: center;
  gap: 18px;
  padding: 0 0 2px 6px;
}
.uni input {
  appearance: none;
  width: 26px;
  height: 26px;
  margin: 0;
  border-radius: 4px;
  background: linear-gradient(#0a7dff, #0060d0);
  display: grid;
  place-items: center;
}
.uni input:checked::before {
  content: "";
  width: 8px;
  height: 15px;
  margin-bottom: 4px;
  border: solid #fff;
  border-width: 0 3px 3px 0;
  transform: rotate(40deg);
}

/* 3D view */
.viewport {
  flex: 1;
  position: relative;
  overflow: hidden;
}
.scene {
  position: absolute;
  width: 100%;
  height: 100%;
}
.float-bar {
  position: absolute;
  top: 0;
  left: 363px;
  display: flex;
  height: 60px;
  padding: 0 18px 0 10px;
  background: #2d3338;
  border: 1px solid #383b3f;
  border-top: none;
}
.float-bar button {
  display: flex;
  align-items: center;
  gap: 12px;
  padding: 0 18px;
  color: #fff;
}
.float-bar button > svg:first-child {
  width: 30px;
  height: 30px;
  fill: currentColor;
}
.float-bar svg[fill="none"]:first-child {
  fill: none !important;
}
.float-bar .chev {
  margin-right: -4px;
}
.float-bar button:disabled {
  color: #62676b;
}
.float-bar .bar-more {
  margin: 6px 0;
  padding: 0;
  border: 1px solid #31363b;
  border-radius: 8px;
}
.float-bar .bar-more svg:first-child {
  width: 22px;
}
.scale-box {
  position: absolute;
  left: 0;
  bottom: 13px;
}
.timer {
  display: grid;
  place-items: center;
  width: 54px;
  height: 42px;
  margin-bottom: 22px;
  border-radius: 0 6px 6px 0;
  background: #16181b;
}
.scale {
  width: 233px;
  margin-left: 12px;
}
.ticks {
  display: grid;
  grid-template-columns: 1fr auto 1fr;
  justify-items: start;
  margin-bottom: 6px;
}
.ticks span {
  padding: 0 5px;
  border-radius: 4px;
  background: #101215;
  font-weight: 500;
  font-size: 19px;
  line-height: 24px;
}
.ticks span:last-child {
  justify-self: end;
}
.ruler {
  display: grid;
  grid-template-columns: repeat(10, 1fr);
  gap: 1px;
  height: 14px;
  padding: 1px;
  background: #000;
}
.ruler i {
  height: 6px;
  background: #e3e3e3;
}
.ruler i:nth-child(even) {
  align-self: end;
}
.gizmo {
  position: absolute;
  right: 0;
  bottom: 42px;
  width: 300px;
}
.axis {
  fill: #e6e7e8;
  font-size: 22px;
  text-anchor: middle;
}
.face {
  fill: #77797c;
  font-size: 14px;
  font-weight: 500;
  text-anchor: middle;
}
.view-btns {
  display: flex;
  justify-content: space-between;
  margin-top: 21px;
  padding: 0 37px 0 82px;
}
.view-btns button {
  color: #fff;
}
.view-btns .dim {
  color: #77797c;
}
.view-btns svg {
  width: 32px;
  height: 32px;
}
```
